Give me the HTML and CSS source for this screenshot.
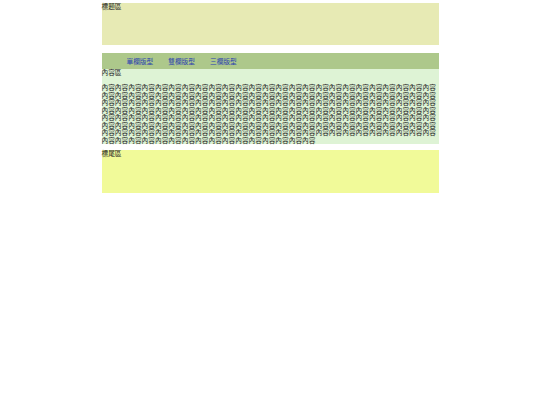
FILE: index.html
```html
<!DOCTYPE html>
<html lang="zh-Hant">
<head>
<meta charset="utf-8">
<title>版型</title>
<link rel="stylesheet" href="styles.css">
</head>
<body>
<div class="wrap">
  <div class="header">標題區</div>
  <div class="nav">
    <a href="#">單欄版型</a>
    <a href="#">雙欄版型</a>
    <a href="#">三欄版型</a>
  </div>
  <div class="content">
    <div class="label">內容區</div>
    <p class="text">內容內容內容內容內容內容內容內容內容內容內容內容內容內容內容內容內容內容內容內容內容內容內容內容內容內容內容內容內容內容內容內容內容內容內容內容內容內容內容內容內容內容內容內容內容內容內容內容內容內容內容內容內容內容內容內容內容內容內容內容內容內容內容內容內容內容內容內容內容內容內容內容內容內容內容內容內容內容內容內容內容內容內容內容內容內容內容內容內容內容內容內容內容內容內容內容內容內容內容內容內容內容內容內容內容內容內容內容內容內容內容內容內容內容內容內容內容內容內容內容內容內容內容內容內容內容內容內容內容內容內容內容內容內容內容內容內容內容內容內容內容內容內容內容內容內容內容內容內容內容內容內容內容內容內容內容內容內容內容內容內容內容內容內容內容內容內容內容內容內容內容內容內容內容內容內容內容內容內容內容內容內容內容內容內容內容內容內容內容內容內容</p>
  </div>
  <div class="footer">標尾區</div>
</div>
</body>
</html>
```
FILE: styles.css
```css
html, body {
  margin: 0;
  padding: 0;
  background: #ffffff;
}
body {
  padding-top: 3px;
  font-family: "Noto Sans CJK TC", "Noto Sans CJK SC", sans-serif;
  font-size: 6.7px;
  line-height: 7.5px;
  color: #222222;
}
.wrap {
  width: 337px;
  margin: 0 auto;
}
.header {
  height: 42px;
  background: #e7eab4;
  margin-bottom: 8px;
}
.nav {
  height: 16px;
  background: #adc88b;
  display: flex;
  align-items: center;
  gap: 15px;
  padding-left: 25px;
  padding-top: 1px;
  box-sizing: border-box;
}
.nav a {
  color: #2a3fb0;
  text-decoration: none;
}
.content {
  background: #def3d5;
  margin-bottom: 6px;
}
.label {
  height: 7.5px;
}
.text {
  margin: 7.5px 0 0 0;
  word-break: break-all;
}
.footer {
  height: 43px;
  background: #f1fa99;
}
```
